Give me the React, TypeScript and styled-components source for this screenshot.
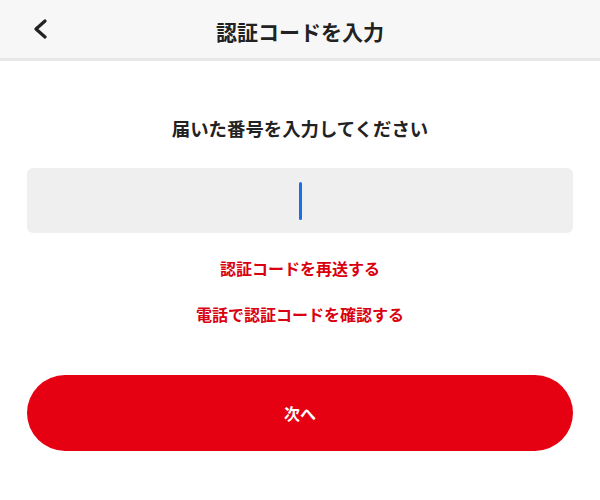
import styled, { createGlobalStyle } from 'styled-components'

const GlobalStyle = createGlobalStyle`
    body {
        margin: 0;
        background: #ffffff;
        font-family: "Noto Sans CJK JP", "Noto Sans", sans-serif;
        color: #222222;
    }
`

const Header = styled.header`
    display: grid;
    grid-template-columns: 1fr auto 1fr;
    align-items: center;
    height: 58px;
    padding: 0 33px;
    background: #f7f7f7;
    border-bottom: 3px solid #e7e7e7;
`

const BackButton = styled.button`
    justify-self: start;
    display: flex;
    align-items: center;
    padding: 0;
    border: none;
    background: none;
    color: #222222;
    cursor: pointer;
`

const Title = styled.h1`
    margin: 4px 0 0;
    font-size: 21px;
    font-weight: 700;
    line-height: 28px;
`

const Main = styled.main`
    display: flex;
    flex-direction: column;
    align-items: center;
    padding: 54px 27px 0;
`

const Lead = styled.p`
    margin: 0;
    font-size: 18.4px;
    font-weight: 700;
    line-height: 26px;
`

const CodeField = styled.div`
    display: flex;
    align-items: center;
    justify-content: center;
    align-self: stretch;
    height: 65px;
    margin-top: 27px;
    border-radius: 6px;
    background: #efefef;
`

const Caret = styled.span`
    width: 3px;
    height: 38px;
    border-radius: 2px;
    background: #1a6fe6;
`

const TextLink = styled.a<{ $gap: number }>`
    margin-top: ${(p) => p.$gap}px;
    font-size: 16px;
    font-weight: 700;
    line-height: 24px;
    color: #d9000f;
    text-decoration: none;
`

const NextButton = styled.button`
    align-self: stretch;
    height: 76px;
    margin-top: 49px;
    border: none;
    border-radius: 38px;
    background: #e50012;
    color: #ffffff;
    font-family: inherit;
    font-size: 16px;
    font-weight: 700;
`

const App = () => {
    return (
        <>
            <GlobalStyle />
            <Header>
                <BackButton aria-label="戻る">
                    <svg width="14" height="20" viewBox="0 0 14 20">
                        <polyline
                            points="12,2 3,10 12,18"
                            fill="none"
                            stroke="currentColor"
                            strokeWidth="3.2"
                            strokeLinecap="round"
                            strokeLinejoin="round"
                        />
                    </svg>
                </BackButton>
                <Title>認証コードを入力</Title>
            </Header>
            <Main>
                <Lead>届いた番号を入力してください</Lead>
                <CodeField>
                    <Caret />
                </CodeField>
                <TextLink href="#" $gap={23}>認証コードを再送する</TextLink>
                <TextLink href="#" $gap={22}>電話で認証コードを確認する</TextLink>
                <NextButton>次へ</NextButton>
            </Main>
        </>
    )
}

export default App
